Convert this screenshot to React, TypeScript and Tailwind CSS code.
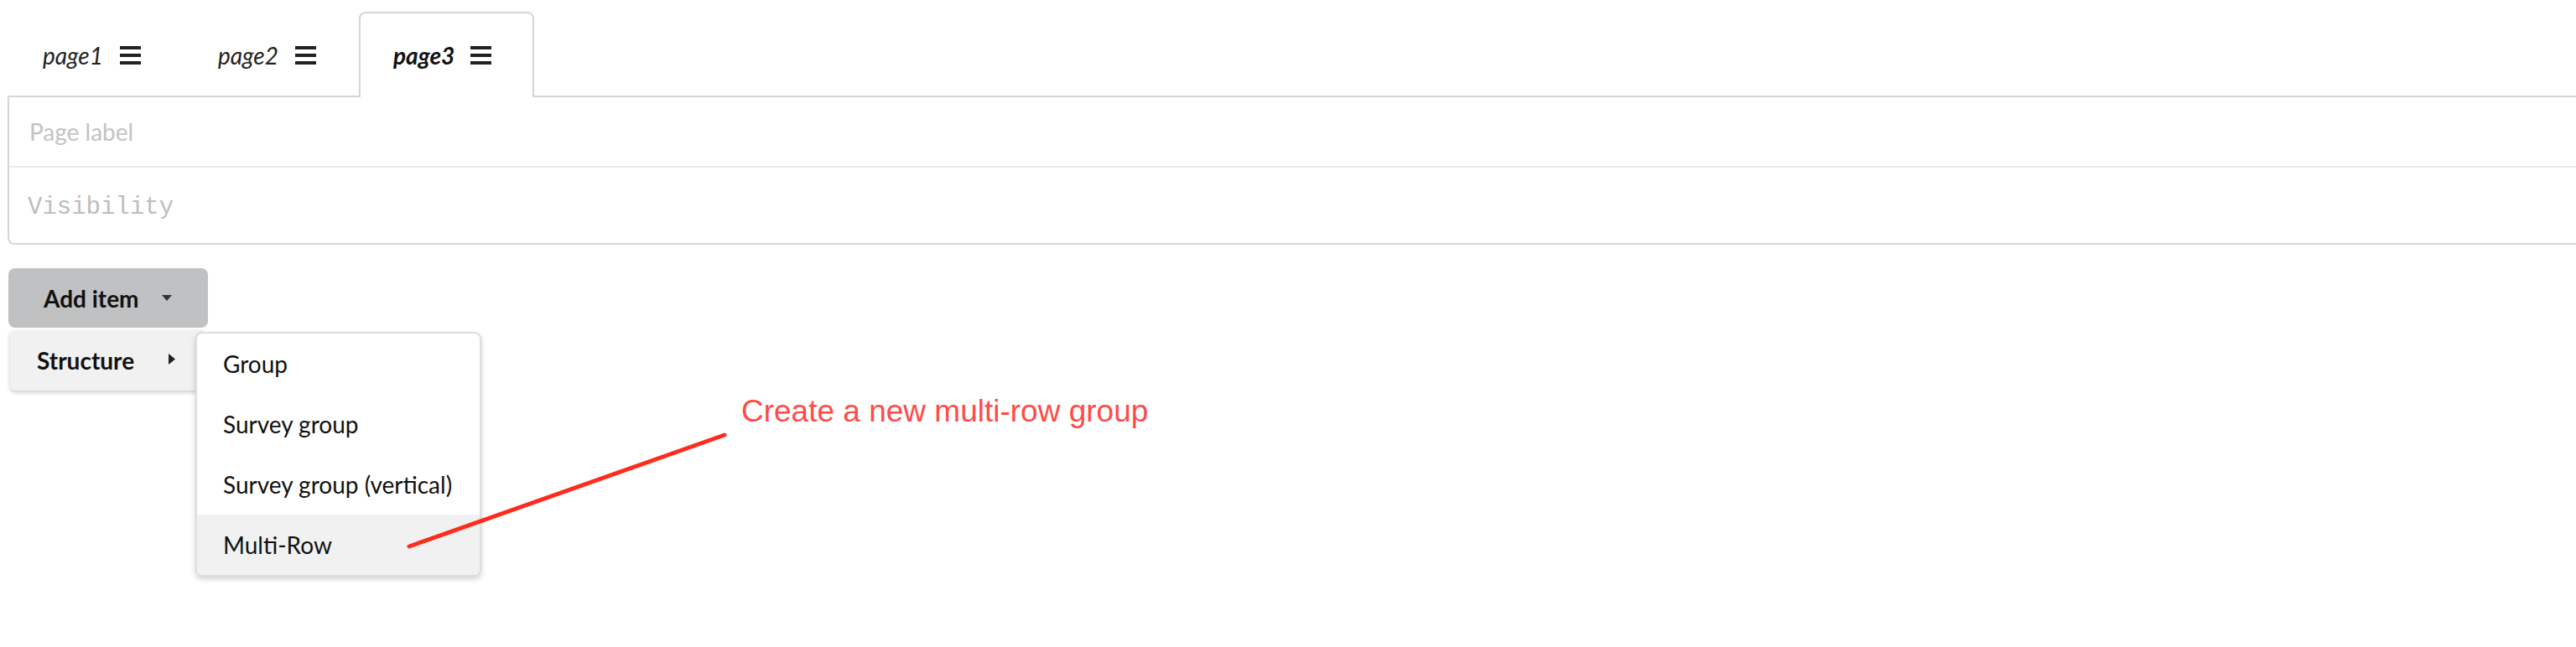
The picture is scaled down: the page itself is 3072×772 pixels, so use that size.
const tabs = [
  { label: "page1", active: false },
  { label: "page2", active: false },
  { label: "page3", active: true },
];

const subItems = ["Group", "Survey group", "Survey group (vertical)", "Multi-Row"];

function Hamburger() {
  return (
    <div className="flex flex-col gap-[5px]">
      <div className="w-[25px] h-[4px] bg-[#222]" />
      <div className="w-[25px] h-[4px] bg-[#222]" />
      <div className="w-[25px] h-[4px] bg-[#222]" />
    </div>
  );
}

export default function App() {
  return (
    <div className="relative w-full h-[772px] bg-white overflow-hidden font-['Lato',sans-serif] text-[#222]">
      {/* tab strip */}
      <div className="flex pl-[10px] pt-[14px]">
        {tabs.map((t) => (
          <div
            key={t.label}
            className={
              t.active
                ? "relative z-10 -mb-[2px] flex h-[102px] w-[209px] items-center gap-[19px] rounded-t-[8px] border-2 border-b-0 border-[#d6d6d6] bg-white pl-[39px]"
                : "-mb-[2px] flex h-[102px] w-[209px] items-center gap-[20px] border-2 border-b-0 border-transparent pl-[39px]"
            }
          >
            <span className={t.active ? "text-[28px] italic font-bold text-[#111]" : "text-[28px] italic"}>
              {t.label}
            </span>
            <Hamburger />
          </div>
        ))}
      </div>

      {/* page settings panel */}
      <div className="ml-[9px] border-2 border-r-0 border-[#d6d6d6] rounded-bl-[8px]">
        <div className="flex h-[84px] items-center border-b-2 border-[#e9e9e9] pl-[24px] text-[28px] text-[#c3c3c3]">
          Page label
        </div>
        <div className="flex h-[90px] items-center pl-[22px] pt-[6px] font-['Liberation_Mono',monospace] text-[29px] text-[#bdbdbd]">
          Visibility
        </div>
      </div>

      {/* add item dropdown */}
      <div className="relative ml-[10px] mt-[28px] w-[238px]">
        <button className="flex h-[71px] w-[238px] items-center rounded-[8px] bg-[#c0c1c3] pl-[42px] text-[28px] font-bold text-[#111]">
          Add item
          <svg className="ml-[27px]" width="12" height="7" viewBox="0 0 12 7">
            <path d="M0 0 L12 0 L6 7 Z" fill="#333" />
          </svg>
        </button>

        <div className="absolute left-[2px] top-[74px] flex h-[72px] w-[232px] items-center rounded-[6px] bg-[#f1f1f1] pl-[32px] shadow-[0_2px_5px_rgba(0,0,0,0.22)]">
          <span className="text-[28px] font-bold text-[#111]">Structure</span>
          <svg className="ml-[41px] -mt-[4px]" width="8" height="13" viewBox="0 0 8 13">
            <path d="M0 0 L8 6.5 L0 13 Z" fill="#222" />
          </svg>
        </div>

        <div className="absolute left-[223px] top-[76px] z-10 w-[341px] overflow-hidden rounded-[8px] border-2 border-[#dedede] bg-white shadow-[0_3px_6px_rgba(0,0,0,0.18)]">
          {subItems.map((item) => (
            <div
              key={item}
              className={
                item === "Multi-Row"
                  ? "flex h-[72px] items-center bg-[#f1f1f1] pl-[31px] text-[28px] text-[#111]"
                  : "flex h-[72px] items-center pl-[31px] text-[28px] text-[#111]"
              }
            >
              {item}
            </div>
          ))}
        </div>
      </div>

      {/* annotation */}
      <svg className="absolute left-0 top-0 z-20" width="1000" height="772">
        <line x1="488" y1="652" x2="864" y2="519" stroke="#ff2b1c" strokeWidth="5" strokeLinecap="round" />
      </svg>
      <div className="absolute left-[884px] top-[472px] z-20 whitespace-nowrap font-['Liberation_Sans',Arial,sans-serif] text-[37px] leading-none text-[#ff4b47]">
        Create a new multi-row group
      </div>
    </div>
  );
}
